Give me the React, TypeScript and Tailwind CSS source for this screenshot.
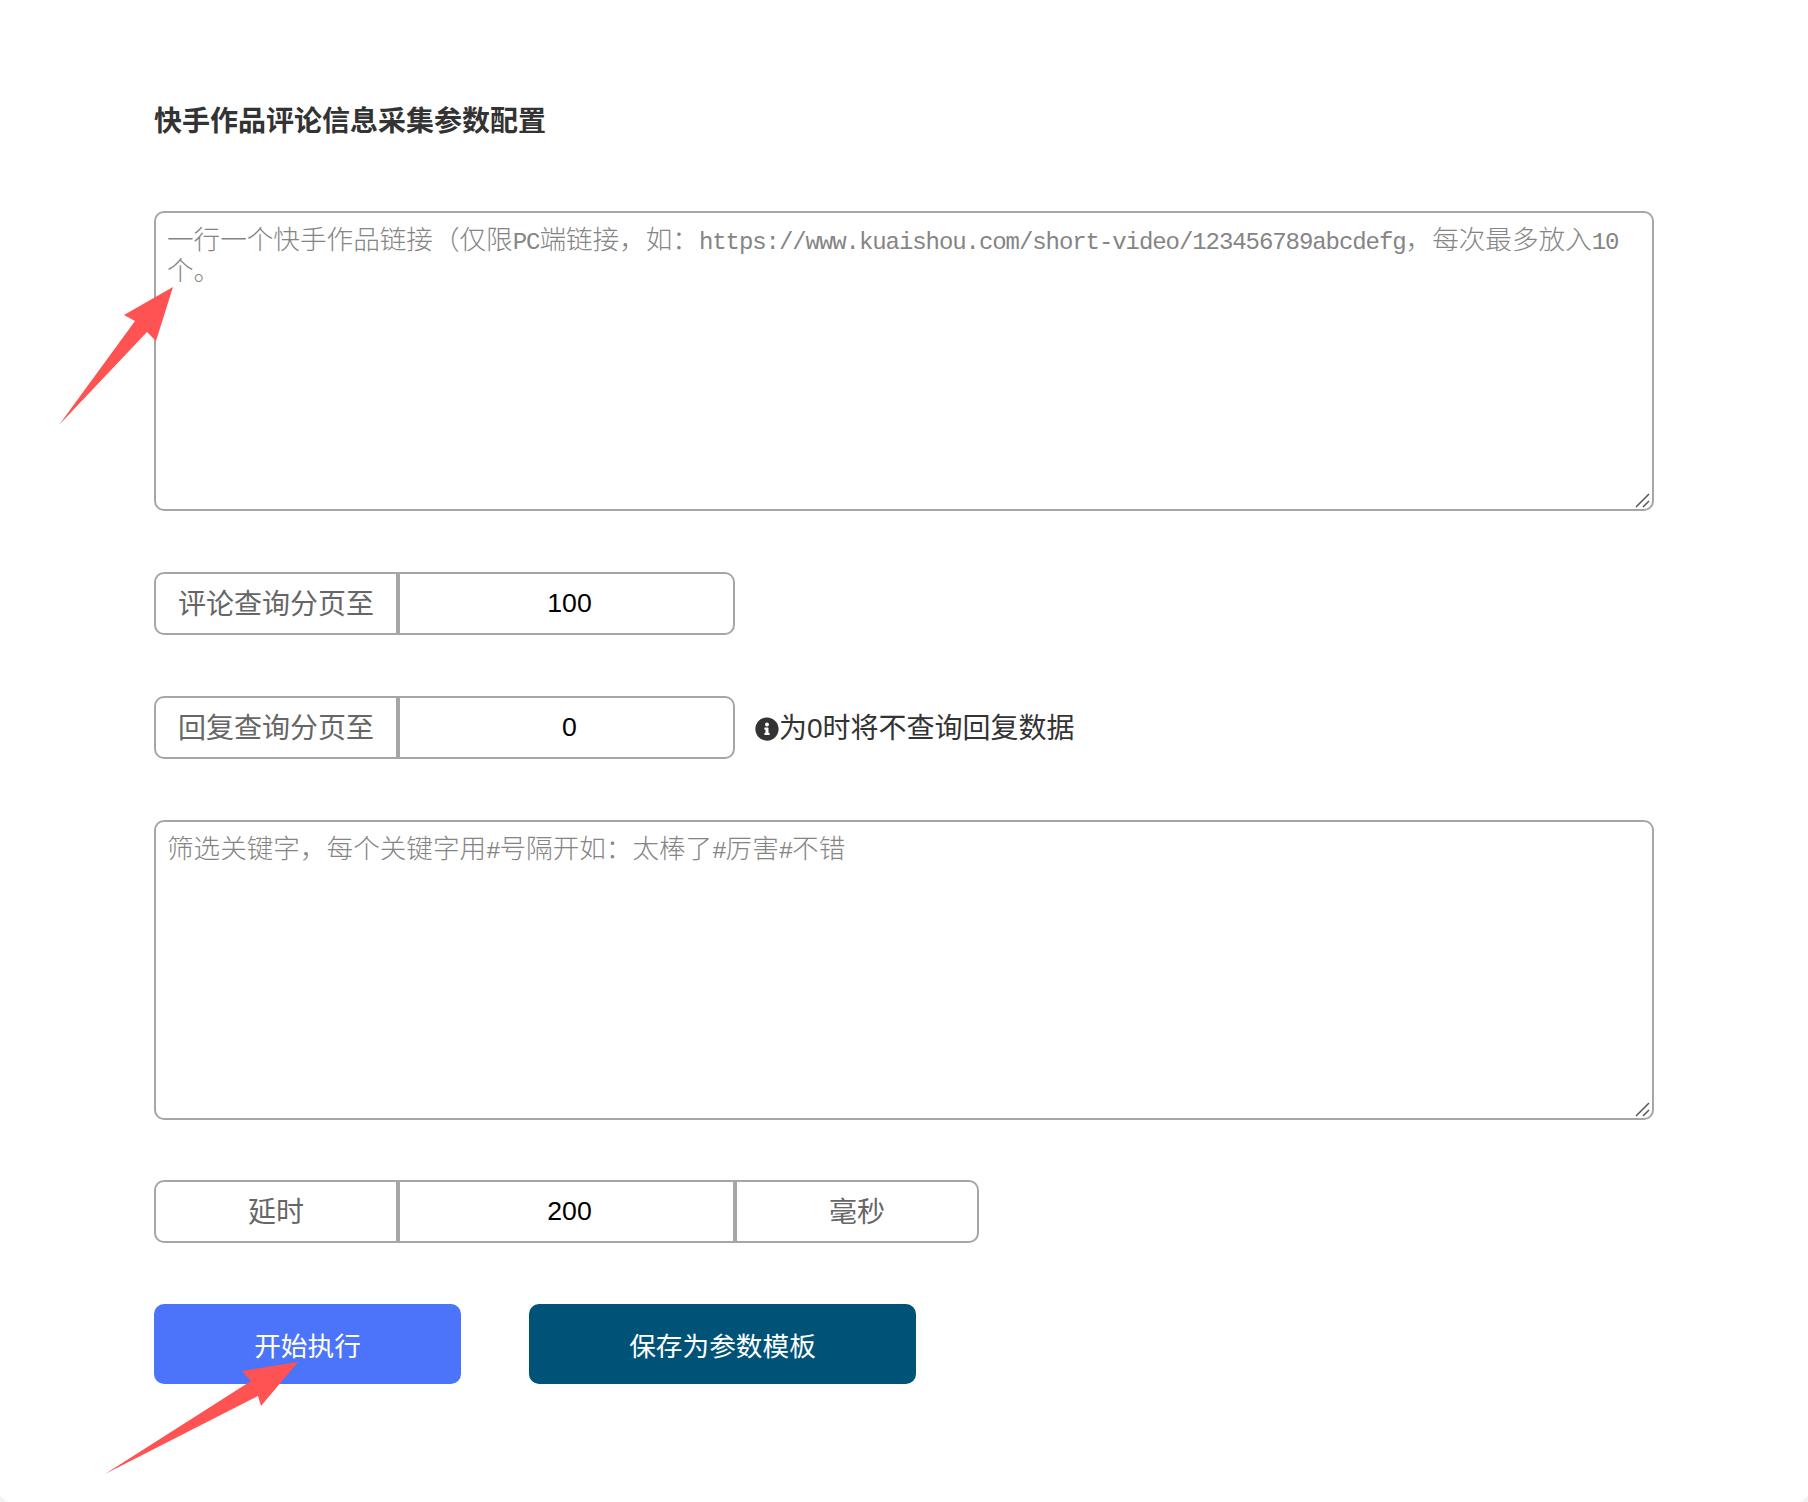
import { FaInfoCircle } from "react-icons/fa";

const sans = "font-['Liberation_Sans','Noto_Sans_CJK_SC',sans-serif]";

function Latin({ children }: { children: string }) {
  return (
    <span className="font-['Liberation_Mono',monospace] text-[24px] leading-[14px] tracking-[-1.07px]">{children}</span>
  );
}

function NoteBox({ children }: { children: React.ReactNode }) {
  return (
    <div className="relative h-[300px] w-[1500px]">
      <textarea className="block h-full w-full resize-none rounded-[10px] border-2 border-[#a6a6a6] bg-white outline-none" />
      <div className="pointer-events-none absolute left-[13px] right-[13px] top-[11px] text-[26.6px] leading-[31px] text-[#858585] font-['Noto_Sans_CJK_SC',sans-serif] font-light">
        {children}
      </div>
      {/* resize grip */}
      <svg className="pointer-events-none absolute bottom-[3px] right-[3px]" width="16" height="16" stroke="#555555" strokeWidth="1.5">
        <path d="M1 15 L14 2 M8 15 L14 9" />
      </svg>
    </div>
  );
}

function Addon({ label, side }: { label: string; side: "left" | "right" }) {
  return (
    <div
      className={
        "flex h-full w-[244px] items-center justify-center border-2 border-[#a6a6a6] pt-[2px] text-[28px] text-[#666666] " +
        (side === "left" ? "rounded-l-[10px]" : "rounded-r-[10px]")
      }
    >
      {label}
    </div>
  );
}

function NumberRow({ label, value, unit }: { label: string; value: string; unit?: string }) {
  return (
    <div className="flex h-[63px] items-stretch">
      <Addon label={label} side="left" />
      <input
        defaultValue={value}
        className={
          "h-full w-[337px] border-2 border-[#a6a6a6] bg-white pl-[6px] text-center text-[26.67px] text-black outline-none " +
          (unit ? "" : "rounded-r-[10px]")
        }
      />
      {unit && <Addon label={unit} side="right" />}
    </div>
  );
}

export default function App() {
  return (
    <div className={"relative h-[1502px] w-[1808px] overflow-hidden bg-white pl-[154px] " + sans}>
      <h1 className="mt-0 pt-[104px] pb-[71px] text-[28px] font-bold leading-[36px] text-[#333333]">
        快手作品评论信息采集参数配置
      </h1>

      <div className="flex flex-col">
        <NoteBox>
          一行一个快手作品链接（仅限<Latin>PC</Latin>端链接，如：<Latin>https://www.kuaishou.com/short-video/123456789abcdefg</Latin>，每次最多放入<Latin>10</Latin>个。
        </NoteBox>

        <div className="mt-[61px]">
          <NumberRow label="评论查询分页至" value="100" />
        </div>

        <div className="mt-[61px] flex items-center">
          <NumberRow label="回复查询分页至" value="0" />
          <div className="ml-[20px] flex items-center pt-[2px] text-[28px] text-[#333333]">
            <FaInfoCircle className="h-[24px] w-[24px]" />
            <span>为0时将不查询回复数据</span>
          </div>
        </div>

        <div className="mt-[61px]">
          <NoteBox>
            筛选关键字，每个关键字用<Latin>#</Latin>号隔开如：太棒了<Latin>#</Latin>厉害<Latin>#</Latin>不错
          </NoteBox>
        </div>

        <div className="mt-[60px]">
          <NumberRow label="延时" value="200" unit="毫秒" />
        </div>

        <div className="mt-[61px] flex gap-[68px]">
          <button className="h-[80px] w-[307px] rounded-[10px] bg-[#4c74fb] pt-[5px] text-[26.67px] text-white">开始执行</button>
          <button className="h-[80px] w-[387px] rounded-[10px] bg-[#005377] pt-[5px] text-[26.67px] text-white">保存为参数模板</button>
        </div>
      </div>

      {/* annotation arrows and the faint window corners */}
      <svg className="absolute left-0 top-0" width="1808" height="1502" fill="#ff5353">
        <path d="M173 287 L124 315 L135 321 L59 425 L147 332 L156 341 Z" />
        <path d="M298 1362 L242 1371 L251 1381 L105 1474 L258 1396 L261 1406 Z" />
        <path d="M0 1496 L7 1502 L0 1502 Z M1808 1496 L1801 1502 L1808 1502 Z" fill="#f2f2f2" />
      </svg>
    </div>
  );
}
